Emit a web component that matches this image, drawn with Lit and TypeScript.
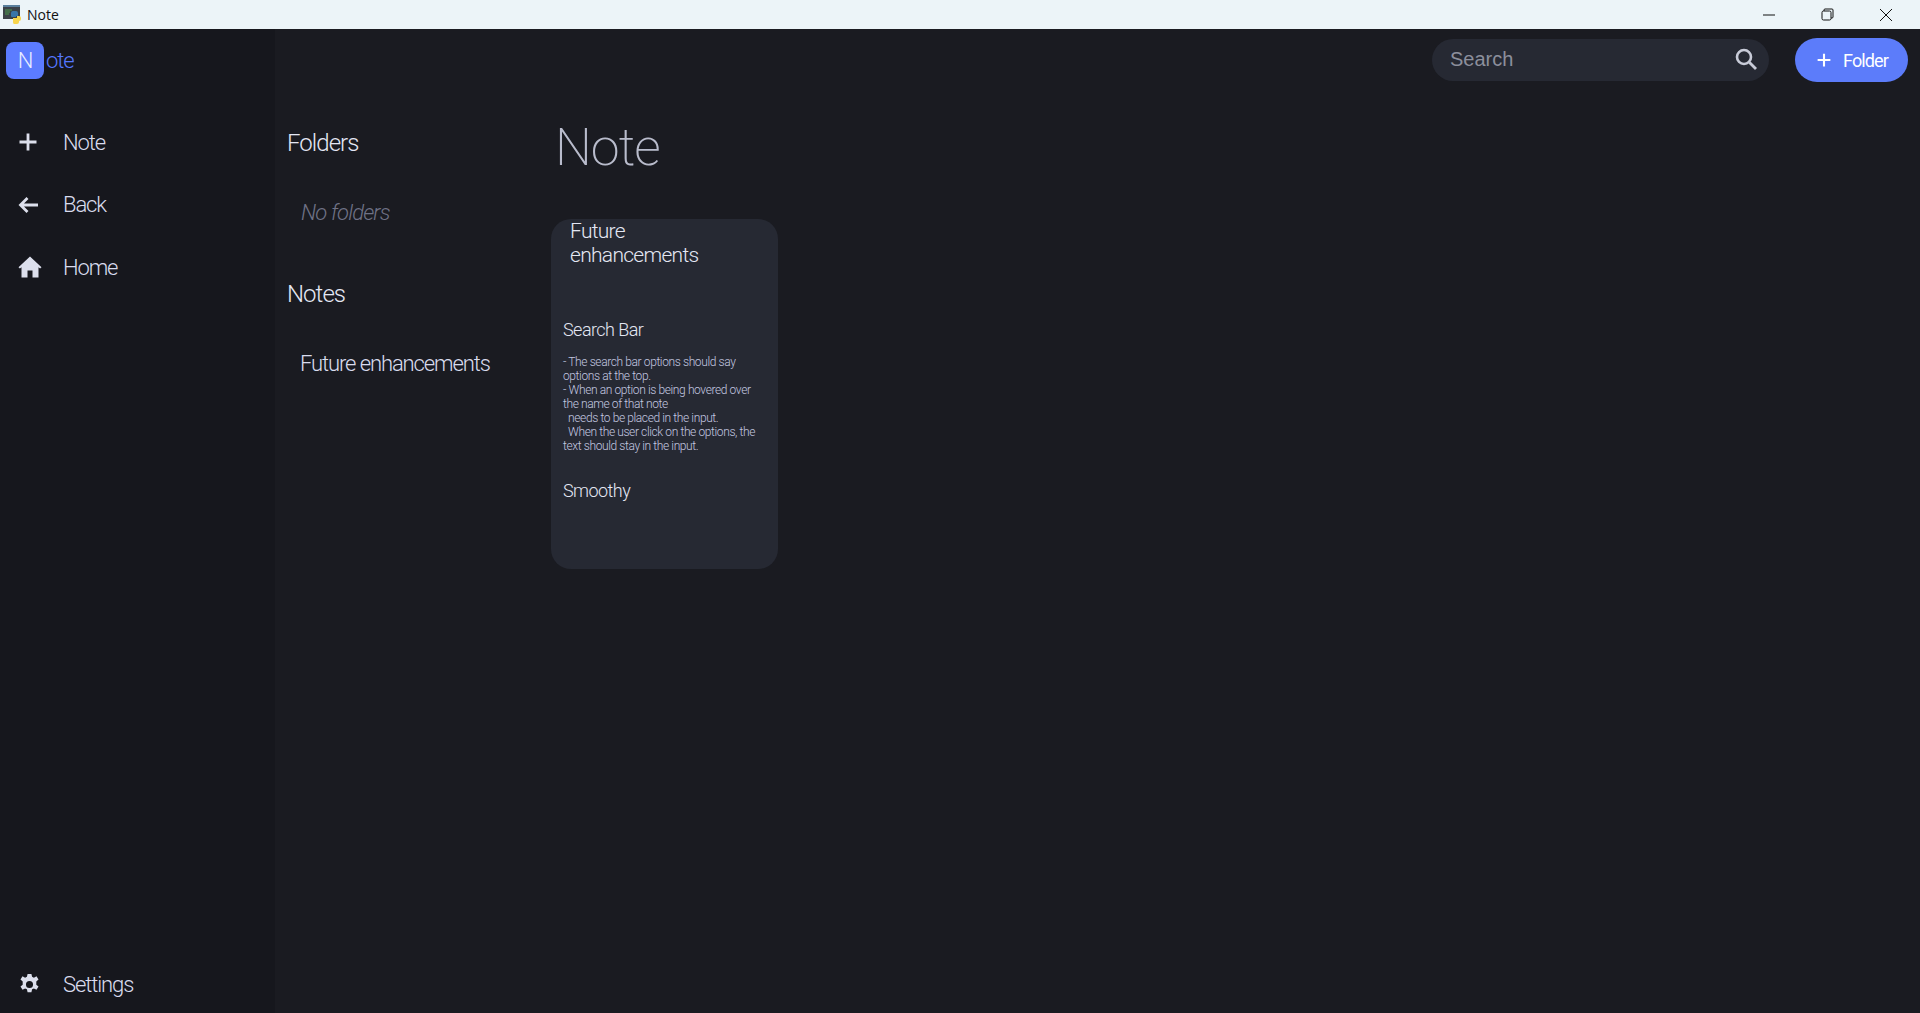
import { LitElement, html, css, svg, CSSResult, TemplateResult } from "lit";
import { customElement } from "lit/decorators.js";

const plus = svg`<path d="M12 3.500v17M3.500 12h17" fill="none" stroke="currentColor" stroke-width="2.800"/>`;
const back = svg`<path d="M22 12H4.500M11.500 5l-7 7 7 7" fill="none" stroke="currentColor" stroke-width="2.800"/>`;
const home = svg`<path fill="currentColor" d="M12 1.500 0.500 12.200l1.400 1.400L3.500 12.200V22.500h6v-7h5v7h6V12.200l1.600 1.400 1.400-1.400L12 1.500z"/>`;
const gear = svg`<path fill="currentColor" fill-rule="evenodd" d="M10 1h4l.7 3 1.900.9 2.700-1.500 2.100 3.400-2.300 2v3.400l2.300 2-2.100 3.400-2.700-1.500-1.900.9-.7 3h-4l-.7-3-1.900-.9-2.700 1.500-2.100-3.400 2.300-2V8.800l-2.300-2 2.100-3.400 2.700 1.500 1.900-.9.700-3zM12 8.300a3.700 3.700 0 1 0 0 7.400 3.700 3.700 0 0 0 0-7.400z"/>`;

@customElement("app-root")
export class AppRoot extends LitElement {
    static get styles(): CSSResult {
        return css`
            :host {
                display: flex;
                flex-direction: column;
                height: 1013px;
                overflow: hidden;
                background: #1a1b21;
                color: #dcdfec;
                font-family: Roboto, sans-serif;
                font-weight: 300;
            }

            .titlebar {
                height: 29px;
                flex: none;
                display: flex;
                align-items: center;
                background: #ecf4f8;
                color: #111;
                font-family: "Open Sans", sans-serif;
                font-size: 14px;
                font-weight: 400;
            }

            .app-icon {
                width: 19px;
                height: 19px;
                margin: 0 5px 0 3px;
            }

            .winbtns {
                margin-left: auto;
                padding-right: 5px;
                display: flex;
            }

            .winbtns svg {
                width: 58.5px;
                height: 14px;
            }

            .body {
                flex: 1;
                display: flex;
                min-height: 0;
            }

            .sidebar {
                width: 275px;
                flex: none;
                display: flex;
                flex-direction: column;
                background: #16171d;
                box-sizing: border-box;
                padding-bottom: 8px;
            }

            .logo {
                display: flex;
                align-items: center;
                padding: 13px 0 0 6px;
                font-size: 22px;
                letter-spacing: -1.1px;
                color: #5577ff;
            }

            .logo-box {
                width: 38px;
                height: 37px;
                border-radius: 8px;
                background: #5c7cff;
                color: #e8edff;
                display: flex;
                align-items: center;
                justify-content: center;
                margin-right: 2px;
            }

            nav {
                display: flex;
                flex-direction: column;
                gap: 20.5px;
                margin-top: 42px;
            }

            .item {
                display: flex;
                align-items: center;
                height: 42px;
                font-size: 22px;
                letter-spacing: -1.1px;
                color: #d9dcee;
            }

            .item svg {
                width: 24px;
                height: 24px;
                margin: 0 23px 0 16px;
                color: #dcdfec;
                flex: none;
            }

            .item svg.home {
                margin: 0 21px 0 18px;
            }

            .item svg.gear {
                width: 23px;
                height: 23px;
                margin: 0 22px 0 18px;
            }

            .item.settings {
                margin-top: auto;
            }

            main {
                flex: 1;
                display: flex;
                flex-direction: column;
                min-width: 0;
            }

            header {
                display: flex;
                justify-content: flex-end;
                align-items: center;
                gap: 26px;
                padding: 9px 12px 0 0;
            }

            .search {
                width: 337px;
                height: 42px;
                box-sizing: border-box;
                border-radius: 21px;
                background: #262933;
                display: flex;
                align-items: center;
                justify-content: space-between;
                padding: 0 11px 2px 18px;
                font-family: "Liberation Sans", sans-serif;
                font-size: 20px;
                font-weight: 400;
                color: #8c8f9c;
            }

            .search svg {
                width: 24px;
                height: 24px;
                color: #c8cbd8;
            }

            .add {
                width: 113px;
                height: 44px;
                box-sizing: border-box;
                border-radius: 22px;
                background: #5c7cfa;
                color: #fff;
                display: flex;
                align-items: center;
                justify-content: center;
                gap: 10px;
                font-size: 18px;
                font-weight: 400;
                letter-spacing: -0.9px;
            }

            .add svg {
                width: 18px;
                height: 18px;
            }

            .content {
                display: flex;
                padding: 40px 0 0 12px;
            }

            .lists {
                width: 264px;
                flex: none;
                display: flex;
                flex-direction: column;
            }

            h2 {
                margin: 0;
                font-size: 24px;
                font-weight: 300;
                line-height: 42px;
                letter-spacing: -0.95px;
                color: #e4e7f4;
            }

            .entry {
                margin: 28px 0 29px 13px;
                font-size: 22px;
                line-height: 42px;
                letter-spacing: -1.1px;
                color: #d9dcee;
            }

            .empty {
                margin: 28px 0 39px 14px;
                letter-spacing: -0.85px;
                font-style: italic;
                color: #6f7286;
            }

            .notes {
                margin-top: -6px;
            }

            .notes h1 {
                margin: 0 0 0 4px;
                font-size: 52px;
                font-weight: 200;
                line-height: 64px;
                letter-spacing: -1px;
                color: #b9bccc;
            }

            .card {
                width: 227px;
                height: 350px;
                margin-top: 39px;
                box-sizing: border-box;
                border-radius: 20px;
                background: #262933;
                padding: 0 12px;
            }

            .card h3 {
                margin: 0 0 0 7px;
                font-size: 21px;
                font-weight: 300;
                line-height: 24px;
                letter-spacing: -0.7px;
                color: #e4e7f4;
            }

            .card h4 {
                margin: 0;
                font-size: 18px;
                font-weight: 300;
                line-height: 24px;
                letter-spacing: -0.55px;
                color: #e4e7f4;
            }

            .card .first {
                margin-top: 51px;
            }

            .card p {
                margin: 13px 0 26px;
                font-size: 12px;
                line-height: 14px;
                letter-spacing: -0.39px;
                white-space: pre-wrap;
                color: #c4c8e0;
            }
        `;
    }

    render(): TemplateResult {
        return html`
            <div class="titlebar">
                <svg class="app-icon" viewBox="0 0 19 19">
                    <rect x="0" y="0" width="17" height="14" fill="#3b4148" />
                    <rect x="0" y="0" width="17" height="2" fill="#5a7f9c" />
                    <path d="M2 5h7M2 7h5M2 9h4" stroke="#4c9a4c" stroke-width="1" />
                    <path d="M8 11V8a2 2 0 0 1 2-2h3a2 2 0 0 1 2 2v3h-2v1H9a1 1 0 0 1-1-1z" fill="#3a75a8" />
                    <path d="M10 13h4v-2h2a2 2 0 0 1 2 2v1a2 2 0 0 1-2 2v1a2 2 0 0 1-2 2h-3a2 2 0 0 1-1-2z" fill="#f7d44c" />
                </svg>
                Note
                <div class="winbtns">
                    <svg viewBox="0 0 58.5 14"><path d="M23 7h12" stroke="#111" fill="none" /></svg>
                    <svg viewBox="0 0 58.5 14"><rect x="24" y="3" width="9" height="9" rx="1.5" stroke="#111" fill="none" /><path d="M26 3V2a1 1 0 0 1 1-1h7a1 1 0 0 1 1 1v7a1 1 0 0 1-1 1h-1" stroke="#111" fill="none" /></svg>
                    <svg viewBox="0 0 58.5 14"><path d="M23 1l12 12M35 1L23 13" stroke="#111" fill="none" /></svg>
                </div>
            </div>
            <div class="body">
                <aside class="sidebar">
                    <div class="logo"><span class="logo-box">N</span>ote</div>
                    <nav>
                        <div class="item"><svg viewBox="0 0 24 24">${plus}</svg>Note</div>
                        <div class="item"><svg viewBox="0 0 24 24">${back}</svg>Back</div>
                        <div class="item"><svg class="home" viewBox="0 0 24 24">${home}</svg>Home</div>
                    </nav>
                    <div class="item settings"><svg class="gear" viewBox="0 0 24 24">${gear}</svg>Settings</div>
                </aside>
                <main>
                    <header>
                        <div class="search">
                            Search
                            <svg viewBox="0 0 24 24"><circle cx="10" cy="10" r="7" fill="none" stroke="currentColor" stroke-width="2.6" /><path d="M15.5 15.5 22 22" stroke="currentColor" stroke-width="2.8" /></svg>
                        </div>
                        <div class="add"><svg viewBox="0 0 24 24">${plus}</svg>Folder</div>
                    </header>
                    <div class="content">
                        <section class="lists">
                            <h2>Folders</h2>
                            <div class="entry empty">No folders</div>
                            <h2>Notes</h2>
                            <div class="entry">Future enhancements</div>
                        </section>
                        <section class="notes">
                            <h1>Note</h1>
                            <div class="card">
                                <h3>Future<br />enhancements</h3>
                                <h4 class="first">Search Bar</h4>
                                <p>- The search bar options should say
options at the top.
- When an option is being hovered over
the name of that note
  needs to be placed in the input.
  When the user click on the options, the
text should stay in the input.</p>
                                <h4>Smoothy</h4>
                            </div>
                        </section>
                    </div>
                </main>
            </div>
        `;
    }
}
